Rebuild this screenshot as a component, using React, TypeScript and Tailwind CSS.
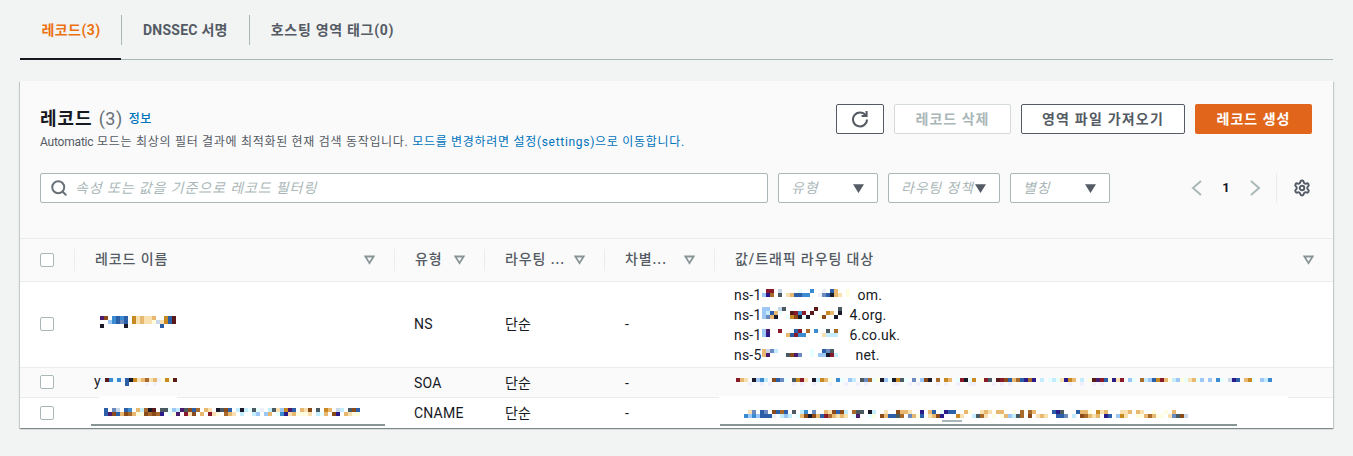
import { Search, Settings } from "lucide-react";

const palette: Record<string, string> = {
  a: "#4a1a6e", b: "#8a4a1a", c: "#3b8bd0", d: "#2b5fa8", e: "#9dc8f5",
  f: "#f9e0b0", g: "#e8b870", h: "#c88a20", i: "#5a1a1a", j: "#1a1a2a",
  k: "#c4ecff", l: "#8a1a2a", m: "#4a5a60", n: "#2a1a8a", o: "#f0f0fa",
  p: "#fffde0", q: "#e8ffff", r: "#a86a2a", s: "#6a8ac0", t: "#c8d8e8",
};

// pixelated (blurred out) bits of the record values
function Mosaic({ rows }: { rows: string[] }) {
  return (
    <div className="flex flex-col">
      {rows.map((row, i) => (
        <div key={i} className="flex h-1">
          {row.split("").map((ch, j) => (
            <span
              key={j}
              className="h-1 w-1 shrink-0"
              style={{ backgroundColor: palette[ch] ?? "transparent" }}
            />
          ))}
        </div>
      ))}
    </div>
  );
}

function FilterArrow() {
  return (
    <svg width="11" height="10" viewBox="0 0 12 10" className="shrink-0">
      <path d="M1.5 1.2h9L6 8.4z" fill="none" stroke="#879596" strokeWidth="2" />
    </svg>
  );
}

function Caret() {
  return (
    <svg width="11" height="9" viewBox="0 0 11 9" className="shrink-0">
      <path d="M0 .2h11L5.5 9z" fill="#545b64" />
    </svg>
  );
}

function Checkbox() {
  return <span className="h-[14px] w-[14px] rounded-[2px] border border-[#aab7b8] bg-white" />;
}

function FilterSelect({ label, className }: { label: string; className: string }) {
  return (
    <div className={`flex h-[30px] items-center justify-between rounded-[2px] border border-[#aab7b8] bg-white pl-3 pr-[13px] ${className}`}>
      <span className="text-[14px] italic tracking-[0.8px] text-[#aab7b8]">{label}</span>
      <Caret />
    </div>
  );
}

function HeaderCell({ label }: { label: string }) {
  return (
    <div className="flex h-[42px] items-center">
      <div className="flex h-[22px] w-full items-center justify-between border-l border-[#eaeded] pb-px pl-5 pr-[19px]">
        <span className="text-[14px] font-medium tracking-[0.9px] text-[#545b64]">{label}</span>
        <FilterArrow />
      </div>
    </div>
  );
}

const columns = "grid grid-cols-[54px_320px_90px_120px_110px_1fr]";
const boxCell = "flex items-center pb-px pl-5";
const typeCell = "flex items-center pl-5 text-[14px] tracking-[0.2px] text-[#16191f]";
const cell = "flex items-center pl-[21px] text-[14px] tracking-[0.2px] text-[#16191f]";

const nsLines = [
  { pre: "ns-1", post: "om.", w: "w-[96px]", rows: [" ll t    q  c  o dg  p", "enr m fgddcc  osdjgf p"] },
  { pre: "ns-1", post: "4.org.", w: "w-[88px]", rows: ["ee  tm       i     m ", "ekdgq  ilcl i   hg j", "esgj  qhbjqj  pb  j"] },
  { pre: "ns-1", post: "6.co.uk.", w: "w-[88px]", rows: ["ea  l   dl r c  m r", "en    gdlcc    fkkk"] },
  { pre: "ns-5", post: "net.", w: "w-[94px]", rows: ["gtsk        q  dsm ", "ga    mbas  q eejlk"] },
];

export default function App() {
  return (
    <div
      className="h-[456px] w-[1353px] overflow-hidden bg-[#f2f3f3] px-5 pt-[15px] text-[#16191f]"
      style={{ fontFamily: 'Roboto, "Noto Sans CJK KR", sans-serif' }}
    >
      <div className="flex h-[45px] items-stretch border-b border-[#aab7b8]">
        <div className="-mb-px flex h-[45px] w-[101px] items-start justify-center border-b-2 border-[#16191f]">
          <span className="flex h-[30px] items-center pl-px text-[14px] font-bold tracking-[0.45px] text-[#ec7211]">레코드(3)</span>
        </div>
        <div className="flex h-[30px] items-center border-l border-[#aab7b8] px-[21px] text-[14px] font-bold tracking-[0.25px] text-[#545b64]">DNSSEC 서명</div>
        <div className="flex h-[30px] items-center border-l border-[#aab7b8] px-[21px] text-[14px] font-bold tracking-[0.7px] text-[#545b64]">호스팅 영역 태그(0)</div>
      </div>

      <div className="mt-[21px] h-[347px] w-[1313px] bg-white shadow-[0_1px_1px_0_rgba(0,28,36,0.3),1px_1px_1px_0_rgba(0,28,36,0.15),-1px_1px_1px_0_rgba(0,28,36,0.15)]">
        <div className="h-[158px] border-b border-[#eaeded] bg-[#fafafa] px-5 pt-[23px]">
          <div className="flex items-start justify-between pr-[1px]">
            <div>
              <div className="flex h-[28px] items-center pt-[1px]">
                <h1 className="text-[18px] font-bold tracking-[1px]">레코드</h1>
                <span className="ml-[6px] text-[18px] tracking-[0.5px] text-[#687078]">(3)</span>
                <a className="ml-[6px] text-[12px] font-medium tracking-[0.5px] text-[#0073bb]">정보</a>
              </div>
              <p className="mt-[1px] text-[12px] leading-[18px] tracking-[0.7px] text-[#545b64]">
                <span className="tracking-[-0.2px]">Automatic</span> 모드는 최상의 필터 결과에 최적화된 현재 검색 동작입니다.{" "}
                <a className="text-[#0073bb]">모드를 변경하려면 설정(settings)으로 이동합니다.</a>
              </p>
            </div>
            <div className="flex gap-[10px]">
              <button className="flex h-[30px] w-[48px] items-center justify-center rounded-[2px] border border-[#545b64] bg-white">
                <svg width="18" height="18" viewBox="0 0 18 18" fill="none" stroke="#545b64" strokeWidth="2">
                  <path d="M14.6 5.2A7 7 0 1 0 16 9.5" />
                  <path d="M15.6 1v5h-5" />
                </svg>
              </button>
              <button className="h-[30px] w-[117px] rounded-[2px] border border-[#d5dbdb] bg-white text-[14px] font-bold tracking-[1px] text-[#aab7b8]">레코드 삭제</button>
              <button className="h-[30px] w-[164px] rounded-[2px] border border-[#545b64] bg-white text-[14px] font-bold tracking-[1.2px] text-[#545b64]">영역 파일 가져오기</button>
              <button className="h-[30px] w-[117px] rounded-[2px] bg-[#e1661c] text-[14px] font-bold tracking-[1px] text-white">레코드 생성</button>
            </div>
          </div>

          <div className="mt-[22px] flex items-center">
            <div className="flex h-[30px] w-[728px] items-center rounded-[2px] border border-[#aab7b8] bg-white pl-[9px]">
              <Search size={18} strokeWidth={2.6} className="text-[#687078]" />
              <span className="ml-[7px] text-[14px] italic tracking-[0.9px] text-[#aab7b8]">속성 또는 값을 기준으로 레코드 필터링</span>
            </div>
            <FilterSelect label="유형" className="ml-[10px] w-[100px]" />
            <FilterSelect label="라우팅 정책" className="ml-[10px] w-[112px]" />
            <FilterSelect label="별칭" className="ml-[10px] w-[100px]" />
            <div className="ml-auto flex items-center pr-[2px]">
              <svg width="11" height="16" viewBox="0 0 11 16" fill="none" stroke="#aab7b8" strokeWidth="2">
                <path d="M10 1 2 8l8 7" />
              </svg>
              <span className="mx-[20px] w-[8px] text-center text-[13px] font-bold">1</span>
              <svg width="11" height="16" viewBox="0 0 11 16" fill="none" stroke="#aab7b8" strokeWidth="2">
                <path d="M1 1l8 7-8 7" />
              </svg>
              <span className="ml-[15px] h-[30px] border-l border-[#eaeded]" />
              <Settings size={18} strokeWidth={2.6} className="ml-4 text-[#545b64]" />
            </div>
          </div>
        </div>

        <div className={`${columns} border-b border-[#eaeded] bg-[#fafafa]`}>
          <div className={`${boxCell} h-[42px]`}>
            <Checkbox />
          </div>
          <HeaderCell label="레코드 이름" />
          <HeaderCell label="유형" />
          <HeaderCell label="라우팅 ..." />
          <HeaderCell label="차별..." />
          <HeaderCell label="값/트래픽 라우팅 대상" />
        </div>

        <div className={`${columns} h-[86px] border-b border-[#eaeded] bg-white`}>
          <div className={boxCell}><Checkbox /></div>
          <div className="flex items-center pb-[6px] pl-[26px]">
            <Mosaic rows={["ab cdcd hfgffg  hdi", "  ecdsd hfgffptfhdi", "j     j        d   "]} />
          </div>
          <div className={typeCell}>NS</div>
          <div className={cell}>단순</div>
          <div className={cell}>-</div>
          <div className="flex flex-col justify-center pl-5 text-[14px] leading-5 tracking-[0.2px] text-[#16191f]">
            {nsLines.map((line) => (
              <div key={line.post} className="flex h-5 items-center">
                <span>{line.pre}</span>
                <div className={`${line.w} -mt-1 shrink-0`}><Mosaic rows={line.rows} /></div>
                <span>{line.post}</span>
              </div>
            ))}
          </div>
        </div>

        <div className={`${columns} h-[30px] border-b border-[#eaeded] bg-[#fafafa]`}>
          <div className={boxCell}><Checkbox /></div>
          <div className="flex items-center pb-[2px] pl-5 text-[14px]">
            y
            <Mosaic rows={["oicqcodjhfgrfgophpi", "      d    o o     "]} />
          </div>
          <div className={`${typeCell} pt-px`}>SOA</div>
          <div className={`${cell} pt-px`}>단순</div>
          <div className={`${cell} pt-px`}>-</div>
          <div className="flex items-center pb-[2px] pl-[22px]">
            <Mosaic rows={[
              "lgf jeck bdsq mhlf jkhgp cq ek msrqpjeqjhmq s ebj r hg qljqh plm ilbdgrdnrn k qkqfnhg k pialdpnfl eq rkedhlgpkepqfgqe e cq tnd ghq ekc",
              "   o  o o     o o  o   o   o  o o      oo  o o    o o  o  oo    o o o              o  o  o o",
            ]} />
          </div>
        </div>

        <div className={`${columns} h-[30px] bg-white`}>
          <div className={boxCell}><Checkbox /></div>
          <div className="flex flex-col justify-between pl-[17px]">
            <div className="-mt-[2px] ml-2 h-[2px] w-[78px] bg-white" />
            <div>
              <div className="mb-[8px] pl-[13px]">
                <Mosaic rows={[
                  "d st dc gkrji mmqekambdr gf jmbd kjkqmqo kmfehad gfb m hg tk mbd",
                  "dabdgbrgppbrbrn qpa lfb g lfp rgf k  ke eg qcnfgpppf kqg bn gfpp",
                ]} />
              </div>
              <div className="mb-[2px] h-[2px] w-[294px] bg-[#879596]" />
            </div>
          </div>
          <div className={typeCell}>CNAME</div>
          <div className={cell}>단순</div>
          <div className={cell}>-</div>
          <div className="flex flex-col justify-between pl-[5px]">
            <div className="-mt-[2px] h-[2px] w-[569px] bg-white" />
            <div>
              <div className="mb-[2px] pl-[25px]">
                <Mosaic rows={[
                  " fs ds bdrd m kc s  gfbdbk rmm jk  f  bggf  n gd qndd  gp  fgf gg  p r rg    dnm   dggp hfg   ffg gf  p  p g",
                  "cecedddo kek qgbjbgdlrgfgf qa  qp bgddmr sgpd fgbn   hf  kmrf p pgekmr b fgf  dds k brgfg nd ehf  ppgrgpp fsmbt",
                ]} />
              </div>
              <div className="mb-[2px] ml-[223px] h-[2px] w-[20px] bg-[#aab7b8]" />
              <div className="mb-[2px] ml-[1px] h-[2px] w-[517px] bg-[#879596]" />
            </div>
          </div>
        </div>
      </div>
    </div>
  );
}
